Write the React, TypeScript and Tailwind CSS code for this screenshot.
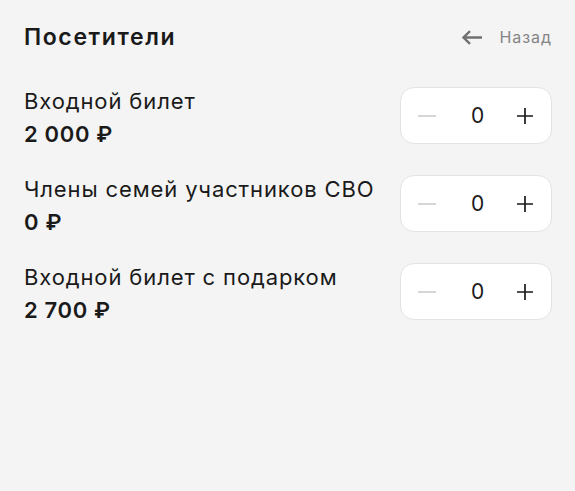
import React, { useState } from 'react';

type Ticket = { id: number; name: string; price: string };

const tickets: Ticket[] = [
  { id: 1, name: 'Входной билет', price: '2 000 ₽' },
  { id: 2, name: 'Члены семей участников СВО', price: '0 ₽' },
  { id: 3, name: 'Входной билет с подарком', price: '2 700 ₽' },
];

const Stepper: React.FC<{ value: number; onChange: (v: number) => void }> = ({ value, onChange }) => (
  <div className="mt-[2px] flex h-[57px] w-[152px] items-center justify-between rounded-[14px] border border-[#e3e3e3] bg-white pl-[17px] pr-[18px]">
    <button
      onClick={() => onChange(Math.max(0, value - 1))}
      className="flex h-6 w-[18px] items-center justify-center text-[#cccccc]"
      aria-label="Уменьшить"
    >
      <svg width="18" height="18" viewBox="0 0 18 18" fill="none">
        <path d="M0 9h18" stroke="currentColor" strokeWidth="1.6" />
      </svg>
    </button>
    <span className="pl-[2px] text-[21px] leading-none text-[#1a1a1a]">{value}</span>
    <button
      onClick={() => onChange(value + 1)}
      className="flex h-6 w-[16px] items-center justify-center text-[#1a1a1a]"
      aria-label="Увеличить"
    >
      <svg width="16" height="16" viewBox="0 0 16 16" fill="none">
        <path d="M0 8h16M8 0v16" stroke="currentColor" strokeWidth="1.7" />
      </svg>
    </button>
  </div>
);

export default function App() {
  const [counts, setCounts] = useState<Record<number, number>>({ 1: 0, 2: 0, 3: 0 });

  return (
    <div className="h-[491px] w-[575px] bg-[#f4f4f4] pl-6 pr-[23px] pt-[17px] font-['Inter',sans-serif] text-[#1a1a1a]">
      <div className="flex h-[40px] items-center justify-between">
        <h1 className="text-[23px] font-semibold tracking-[0.07em] leading-[32px]">Посетители</h1>
        <button className="flex items-center gap-[17px] text-[16px] tracking-[0.06em] text-[#858585]">
          <svg width="21" height="15" viewBox="0 0 21 15" fill="none">
            <path d="M21 7.5H2.5M9 1.2L2.5 7.5 9 13.8" stroke="#707070" strokeWidth="2.4" />
          </svg>
          Назад
        </button>
      </div>
      <div className="mt-[28px] flex flex-col gap-[22px]">
        {tickets.map(t => (
          <div key={t.id} className="flex items-start justify-between">
            <div className="flex flex-col">
              <span className="text-[22px] tracking-[0.04em] leading-[32px]">{t.name}</span>
              <span className="text-[22px] font-semibold tracking-[0.03em] leading-[34px]">{t.price}</span>
            </div>
            <Stepper value={counts[t.id]} onChange={v => setCounts(c => ({ ...c, [t.id]: v }))} />
          </div>
        ))}
      </div>
    </div>
  );
}
